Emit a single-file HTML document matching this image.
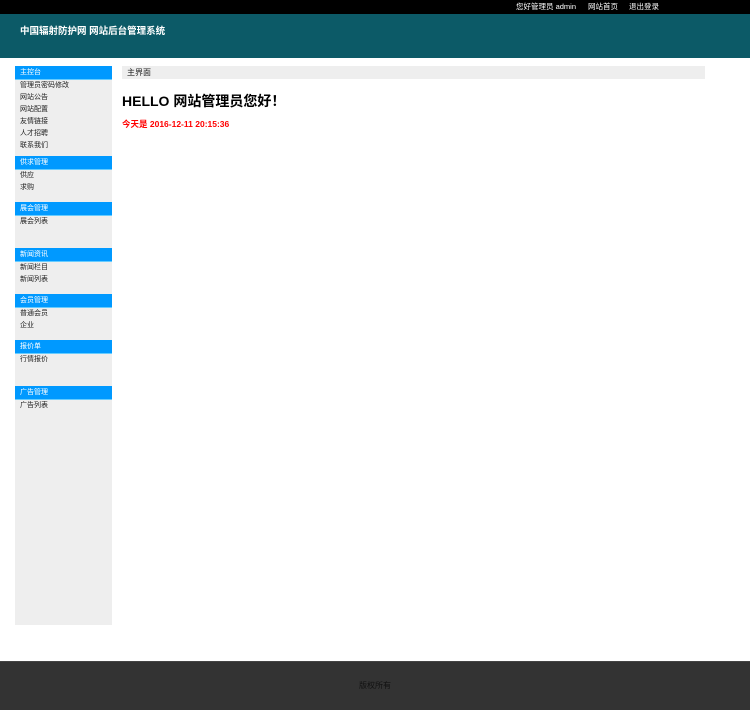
<!DOCTYPE html>
<html><head><meta charset="utf-8"><style>
*{margin:0;padding:0;box-sizing:border-box}
body{width:750px;height:710px;position:relative;background:#fff;font-family:"Liberation Sans","Noto Sans CJK SC",sans-serif;overflow:hidden}
.top{position:absolute;left:0;top:0;width:750px;height:14px;background:#000;color:#fff;font-size:7.5px;line-height:14px}
.top span{position:absolute;top:0}
.hd{position:absolute;left:0;top:14px;width:750px;height:44px;background:#0c5a67;color:#fff;font-size:9.5px;font-weight:bold}
.hd div{position:absolute;left:20px;top:9px}
.side{position:absolute;left:15px;top:66px;width:97px;height:559px;background:#eee}
.sec{position:absolute;left:0;width:97px}
.sh{height:14px;background:#09f;color:#fff;font-size:7px;line-height:14px;padding-left:5px;border-bottom:1px solid #6cf}
.it{font-size:7px;color:#222;height:12px;line-height:12px;padding-left:5px}
.sec .it:first-of-type{margin-top:1px}
.bc{position:absolute;left:122px;top:66px;width:583px;height:13px;background:#eee;font-size:8px;line-height:13px;padding-left:5px;color:#222}
h1{position:absolute;left:122px;top:91px;font-size:14px;font-weight:bold;color:#000;white-space:nowrap}
.dt{position:absolute;left:122px;top:118px;font-size:8.5px;font-weight:bold;color:#f00;white-space:nowrap}
.ft{position:absolute;left:0;top:661px;width:750px;height:49px;background:#333;border-top:1px solid #444;color:#111;font-size:8px;text-align:center;line-height:48px}
</style></head><body>
<div class="top"><span style="left:516px">您好管理员 admin</span><span style="left:588px">网站首页</span><span style="left:629px">退出登录</span></div>
<div class="hd"><div>中国辐射防护网 网站后台管理系统</div></div>
<div class="side">
<div class="sec" style="top:0"><div class="sh">主控台</div><div class="it">管理员密码修改</div><div class="it">网站公告</div><div class="it">网站配置</div><div class="it">友情链接</div><div class="it">人才招聘</div><div class="it">联系我们</div></div>
<div class="sec" style="top:90px"><div class="sh">供求管理</div><div class="it">供应</div><div class="it">求购</div></div>
<div class="sec" style="top:136px"><div class="sh">展会管理</div><div class="it">展会列表</div></div>
<div class="sec" style="top:182px"><div class="sh">新闻资讯</div><div class="it">新闻栏目</div><div class="it">新闻列表</div></div>
<div class="sec" style="top:228px"><div class="sh">会员管理</div><div class="it">普通会员</div><div class="it">企业</div></div>
<div class="sec" style="top:274px"><div class="sh">报价单</div><div class="it">行情报价</div></div>
<div class="sec" style="top:320px"><div class="sh">广告管理</div><div class="it">广告列表</div></div>
</div>
<div class="bc">主界面</div>
<h1>HELLO 网站管理员您好！</h1>
<div class="dt">今天是 2016-12-11 20:15:36</div>
<div class="ft">版权所有</div>
</body></html>
